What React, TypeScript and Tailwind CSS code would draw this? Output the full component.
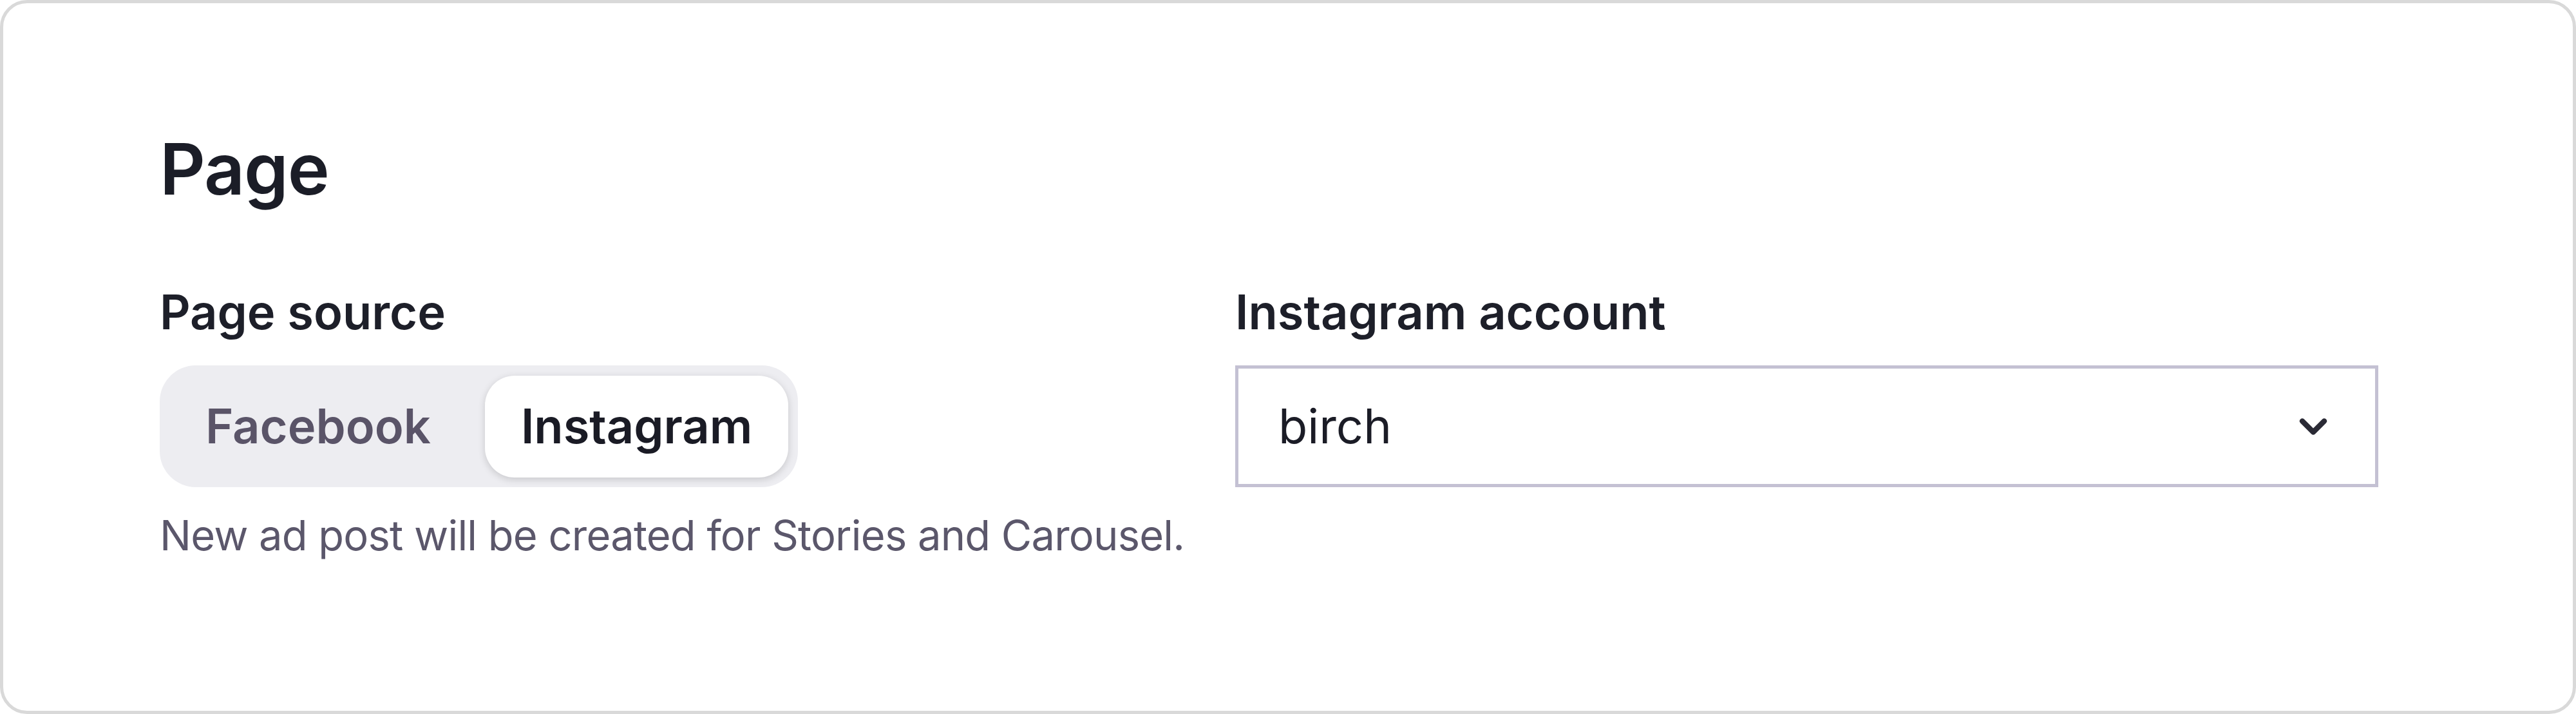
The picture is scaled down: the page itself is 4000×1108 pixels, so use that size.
import React, { useState } from 'react';
import { ChevronDown } from 'lucide-react';

const font = { fontFamily: 'Inter, "Noto Sans", sans-serif' };

type Source = 'facebook' | 'instagram';

const SourceToggle: React.FC<{ value: Source; onChange: (v: Source) => void }> = ({ value, onChange }) => {
  const options: { id: Source; label: string }[] = [
    { id: 'facebook', label: 'Facebook' },
    { id: 'instagram', label: 'Instagram' },
  ];

  return (
    <div className="mt-[46px] inline-flex h-[189px] items-center gap-[28px] self-start rounded-[56px] bg-[#ededf1] p-[15px]">
      {options.map((opt) => {
        const active = opt.id === value;
        return (
          <button
            key={opt.id}
            type="button"
            onClick={() => onChange(opt.id)}
            className={`flex h-[158px] items-center rounded-[46px] px-[56px] text-[74px] font-semibold ${
              active
                ? 'bg-white text-[#1a1b25] shadow-[0_3px_12px_rgba(0,0,0,0.16)]'
                : 'text-[#5a5468]'
            }`}
          >
            {opt.label}
          </button>
        );
      })}
    </div>
  );
};

export default function App() {
  const [source, setSource] = useState<Source>('instagram');

  return (
    <div style={font} className="h-[1108px] w-[4000px] bg-white">
      <div className="h-full w-full rounded-[42px] border-[5px] border-[#d9d9d9] pl-[243px] pt-[202px]">
        <h2 className="text-[110px] font-semibold leading-none tracking-[-0.01em] text-[#1b1d27]">Page</h2>

        <div className="mt-[130px] flex">
          {/* Page source */}
          <div className="flex w-[1670px] flex-col">
            <span className="text-[74px] font-semibold leading-none text-[#1d1f29]">Page source</span>
            <SourceToggle value={source} onChange={setSource} />
            <p className="mt-[42px] text-[65px] leading-none tracking-[-0.012em] text-[#5b576b]">
              New ad post will be created for Stories and Carousel.
            </p>
          </div>

          {/* Instagram account */}
          <div className="flex w-[1775px] flex-col">
            <span className="text-[74px] font-semibold leading-none text-[#1d1f29]">Instagram account</span>
            <div className="mt-[46px] flex h-[189px] items-center justify-between border-[5px] border-[#c4c1d3] bg-white pl-[62px] pr-[62px]">
              <span className="text-[74px] text-[#1b1c26]">birch</span>
              <ChevronDown size={68} strokeWidth={2.9} className="text-[#2a2a35]" />
            </div>
          </div>
        </div>
      </div>
    </div>
  );
}
